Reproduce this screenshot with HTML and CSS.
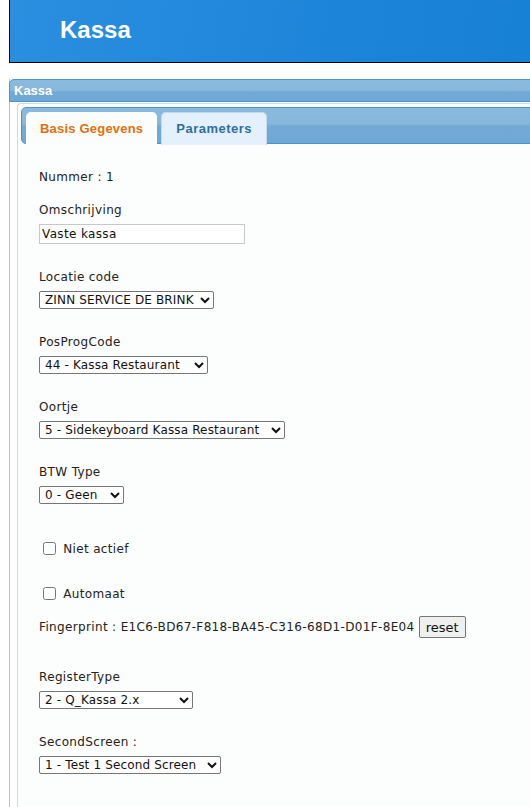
FILE: index.html
```html
<!DOCTYPE html>
<html lang="nl">
<head>
<meta charset="utf-8">
<title>Kassa</title>
<link rel="stylesheet" href="styles.css">
</head>
<body>
<header class="topbar">
  <h1 class="topbar-title">Kassa</h1>
</header>

<section class="panel">
  <div class="panel-header">Kassa</div>
  <div class="panel-body">
    <div class="tabs">
      <ul class="tab-nav">
        <li class="tab tab-active">Basis Gegevens</li>
        <li class="tab tab-params">Parameters</li>
      </ul>
      <div class="tab-content">
        <div class="line">Nummer : 1</div>

        <div class="field">
          <div class="label">Omschrijving</div>
          <input class="text-input" type="text" value="Vaste kassa">
        </div>

        <div class="field">
          <div class="label">Locatie code</div>
          <select class="sel w-locatie"><option>ZINN SERVICE DE BRINK</option></select>
        </div>

        <div class="field">
          <div class="label">PosProgCode</div>
          <select class="sel w-posprog"><option>44 - Kassa Restaurant</option></select>
        </div>

        <div class="field">
          <div class="label">Oortje</div>
          <select class="sel w-oortje"><option>5 - Sidekeyboard Kassa Restaurant</option></select>
        </div>

        <div class="field">
          <div class="label">BTW Type</div>
          <select class="sel w-btw"><option>0 - Geen</option></select>
        </div>

        <label class="check check-first"><input type="checkbox"> Niet actief</label>
        <label class="check check-second"><input type="checkbox"> Automaat</label>

        <div class="finger">Fingerprint : E1C6-BD67-F818-BA45-C316-68D1-D01F-8E04 <button class="btn" type="button">reset</button></div>

        <div class="field field-register">
          <div class="label">RegisterType</div>
          <select class="sel w-register"><option>2 - Q_Kassa 2.x</option></select>
        </div>

        <div class="field">
          <div class="label">SecondScreen :</div>
          <select class="sel w-second"><option>1 - Test 1 Second Screen</option></select>
        </div>
      </div>
    </div>
  </div>
</section>
</body>
</html>
```

FILE: styles.css
```css
html, body {
  margin: 0;
  padding: 0;
  overflow: hidden;
  background: #ffffff;
}

body {
  font-family: "DejaVu Sans", Verdana, sans-serif;
  font-size: 12px;
  letter-spacing: 0.35px;
  color: #222222;
}

.topbar {
  margin: 0 -40px 0 9px;
  height: 62px;
  border-left: 1px solid #000;
  border-bottom: 1px solid #000;
  background: linear-gradient(100deg, #2b8fe0 0%, #1f86da 50%, #1580d4 100%);
  display: flex;
  align-items: center;
}

.topbar-title {
  margin: 0 0 0 50px;
  font-family: "Liberation Sans", Arial, sans-serif;
  font-weight: bold;
  font-size: 24px;
  letter-spacing: 0;
  color: #ffffff;
  padding-bottom: 2px;
}

.panel {
  margin: 16px -40px 0 9px;
  border-left: 1px solid #a6c9e2;
  background: #fcfdfd;
}

.panel-header {
  margin-left: -1px;
  height: 21px;
  line-height: 21px;
  border: 1px solid #4f93cf;
  border-top-left-radius: 5px;
  background: linear-gradient(180deg, #8bbadf 0%, #87b7dc 50%, #72aad5 56%, #6fa8d4 100%);
  font-family: "Liberation Sans", Arial, sans-serif;
  font-weight: bold;
  font-size: 13px;
  letter-spacing: 0;
  color: #ffffff;
  padding-left: 4px;
}

.panel-body {
  padding: 1px 0 0 7px;
  background: #ffffff;
}

.tabs {
  border-left: 1px solid #c5dbec;
  border-top: 1px solid #c5dbec;
  border-top-left-radius: 4px;
  padding: 3px 0 0 3px;
  background: #fcfdfd;
}

.tab-nav {
  list-style: none;
  margin: 0;
  padding: 4px 0 0 4px;
  height: 31px;
  border: 1px solid #4b94d0;
  border-radius: 5px 0 0 5px;
  background: linear-gradient(180deg, #8bbadf 0%, #87b7dc 45%, #72aad5 52%, #6fa8d4 100%);
  display: flex;
  gap: 4px;
}

.tab {
  height: 32px;
  line-height: 31px;
  padding: 0 12px 0 13px;
  border: 1px solid #c5dbec;
  border-bottom: none;
  border-radius: 5px 5px 0 0;
  background: #e4f1fc;
  font-family: "Liberation Sans", Arial, sans-serif;
  font-weight: bold;
  font-size: 13px;
  color: #2e6e9e;
  letter-spacing: 0.2px;
}

.tab-active {
  background: #fbfdfd;
  border-color: #fbfdfd;
  color: #e17009;
  padding-right: 13px;
}

.tab-params {
  padding: 0 14px 0 14px;
  letter-spacing: 0.5px;
}

.tab-content {
  padding: 25px 0 40px 18px;
  background: #fcfdfd;
}

.line {
  line-height: 16px;
}

.label {
  line-height: 16px;
  margin-bottom: 6px;
}

.field {
  margin-top: 17px;
}

.field + .field {
  margin-top: 25px;
}

.text-input {
  display: block;
  box-sizing: border-box;
  width: 206px;
  height: 20px;
  margin: 0;
  padding: 0 2px;
  border: 1px solid #c8c8c8;
  background: #ffffff;
  font-family: "DejaVu Sans", Verdana, sans-serif;
  font-size: 12px;
  letter-spacing: 0.35px;
  color: #111;
}

.sel {
  display: block;
  box-sizing: border-box;
  height: 18px;
  margin: 0;
  padding: 0 0 0 1px;
  border: 1px solid #767676;
  border-radius: 2px;
  background: #ffffff;
  font-family: "DejaVu Sans", Verdana, sans-serif;
  font-size: 12px;
  letter-spacing: 0.15px;
  color: #111;
}

.w-locatie { width: 175px; }
.w-posprog { width: 169px; }
.w-oortje { width: 246px; }
.w-btw { width: 85px; }
.w-register { width: 154px; }
.w-second { width: 182px; }

.check {
  display: block;
  line-height: 16px;
}

.check input {
  margin: 0 3px 0 4px;
  width: 13px;
  height: 13px;
  vertical-align: -2px;
}

.check-first {
  margin-top: 37px;
}

.check-second {
  margin-top: 29px;
}

.finger {
  margin-top: 14px;
  display: flex;
  align-items: center;
  gap: 4px;
}

.btn {
  height: 22px;
  width: 47px;
  padding: 0;
  margin: 0;
  border: 1px solid #767676;
  border-radius: 2px;
  background: #efefef;
  font-family: "DejaVu Sans", Verdana, sans-serif;
  font-size: 13px;
  color: #111;
}

.field-register {
  margin-top: 31px;
}
```
